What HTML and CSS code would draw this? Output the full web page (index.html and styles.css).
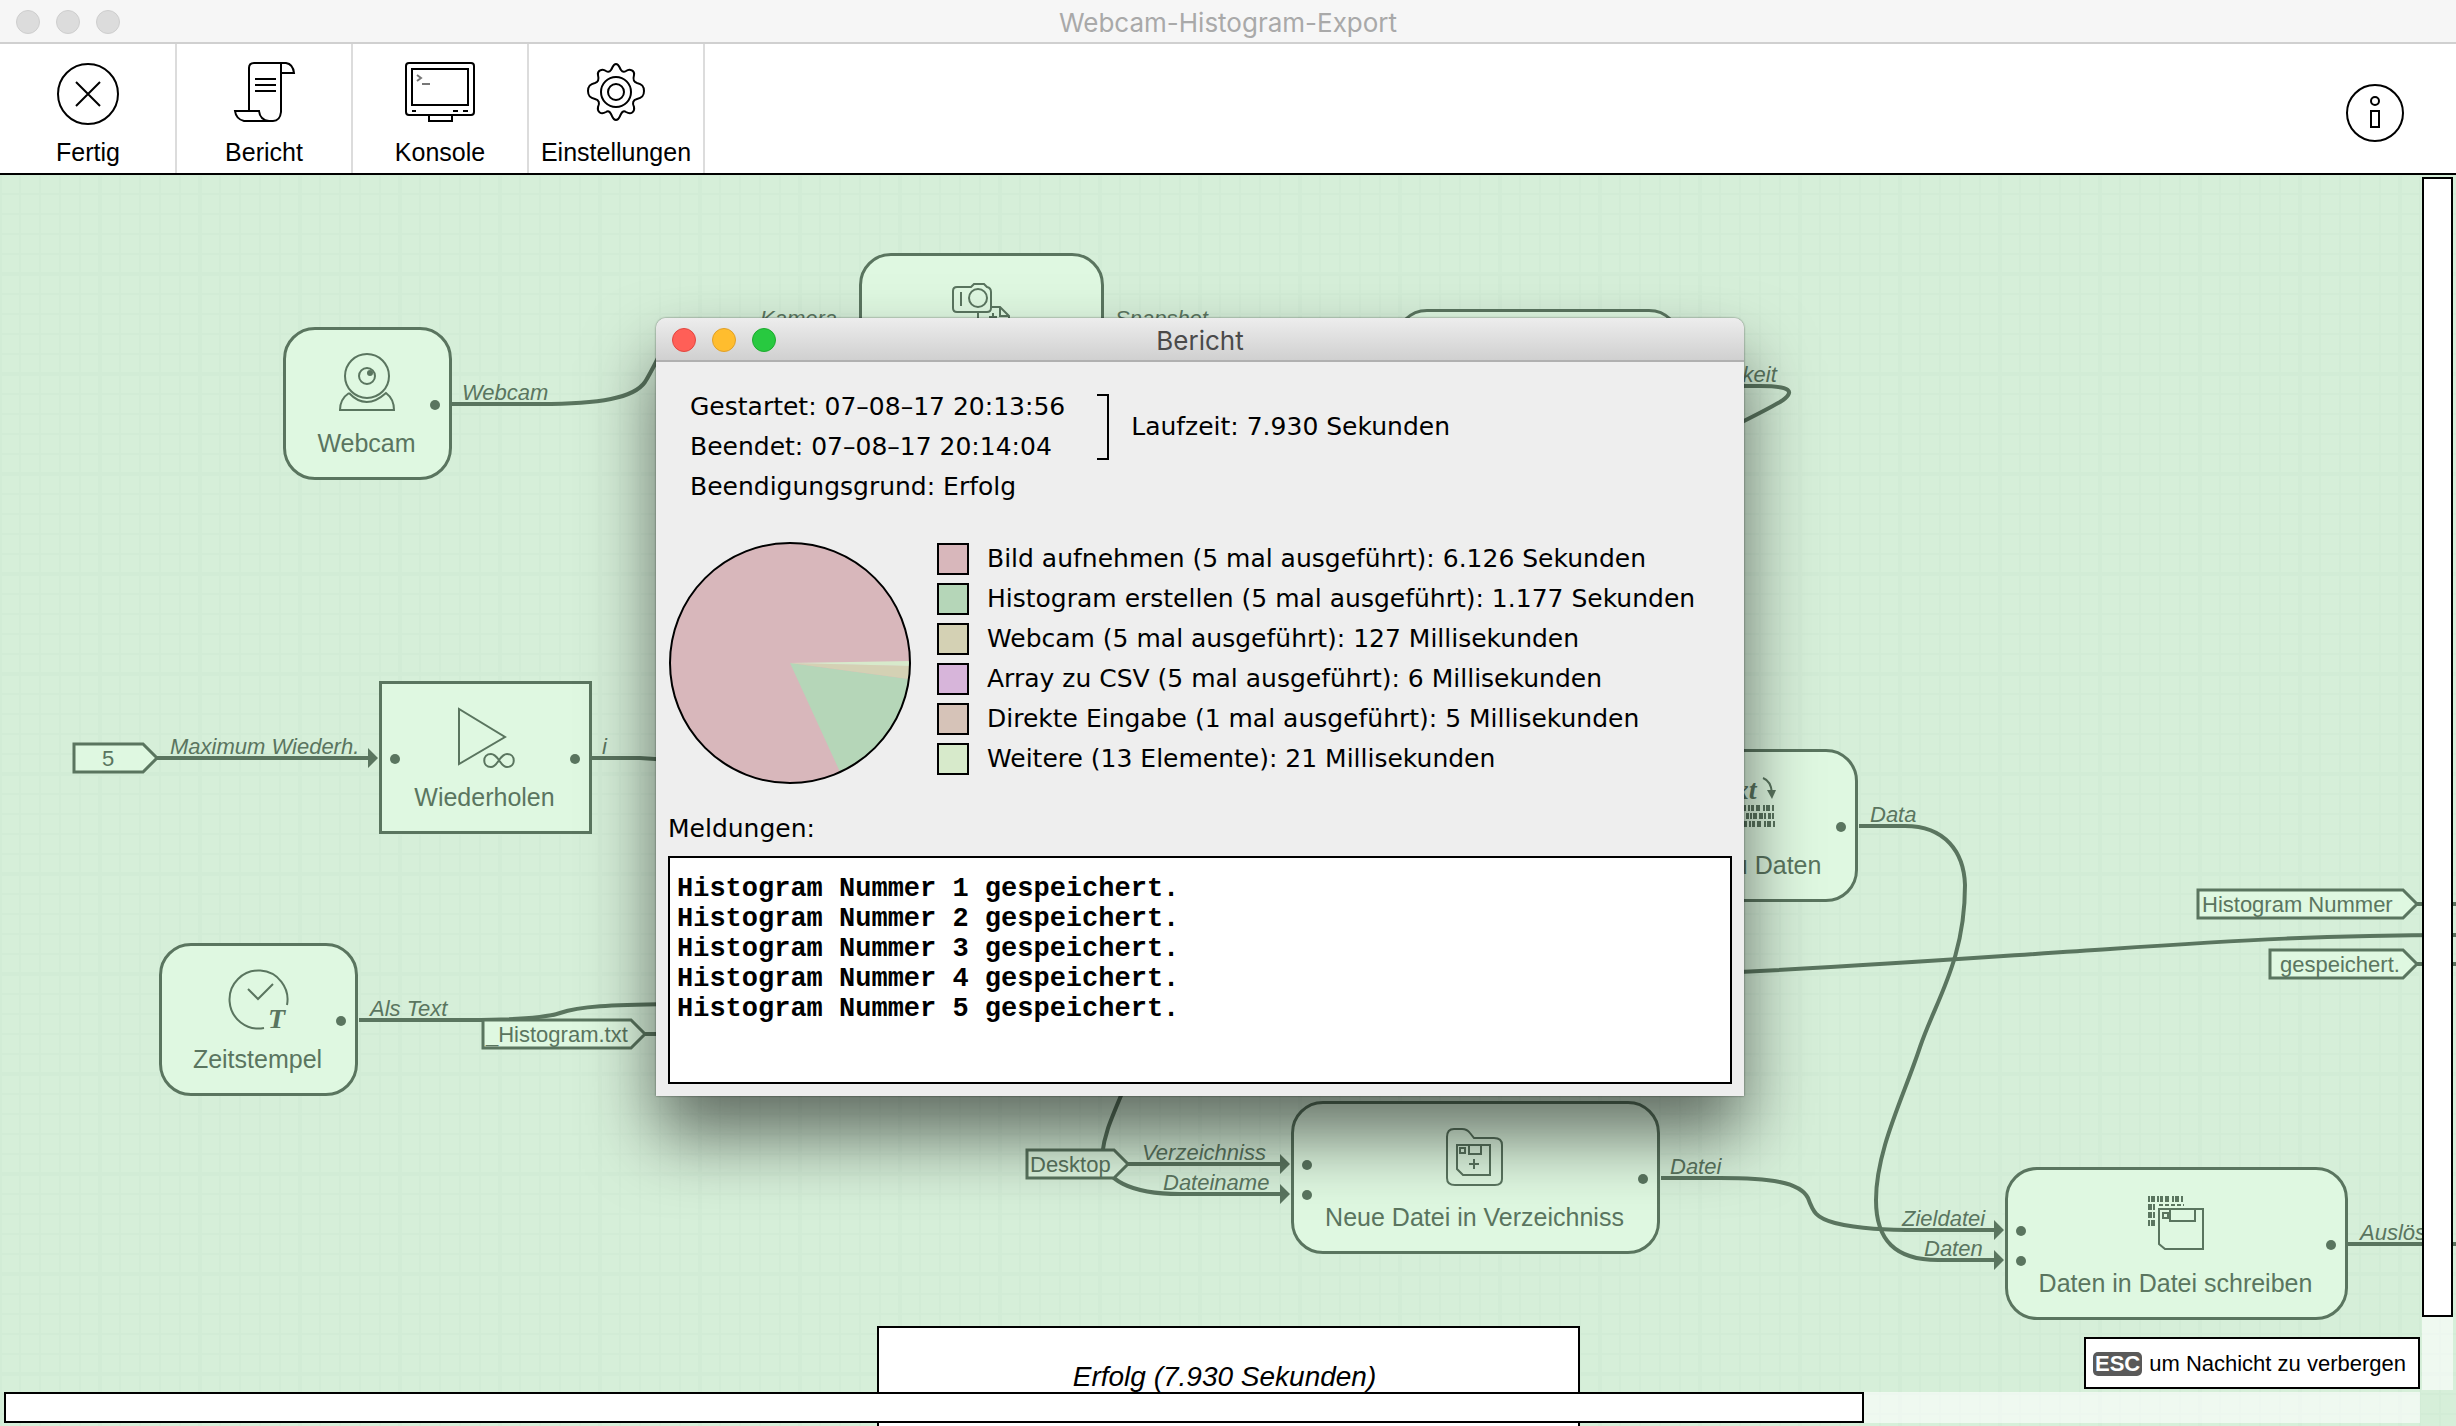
FILE: index.html
```html
<!DOCTYPE html>
<html lang="de">
<head>
<meta charset="utf-8">
<title>Webcam-Histogram-Export</title>
<link rel="stylesheet" href="styles.css">
</head>
<body>
<header class="titlebar">
  <div class="lights"><span class="light"></span><span class="light"></span><span class="light"></span></div>
  <h1 class="title">Webcam-Histogram-Export</h1>
</header>
<nav class="toolbar">
  <button class="tool" type="button">
    <svg class="tool-icon" viewBox="0 0 72 64"><circle cx="36" cy="32" r="30"/><path d="M24 20L48 44M48 20L24 44"/></svg>
    Fertig
  </button>
  <button class="tool" type="button">
    <svg class="tool-icon" viewBox="0 0 72 64"><path d="M21 49V6Q21 1 26 1H58Q65 2 66 11H53V50Q52 59 45 59H16Q8 57 7 49H31Q32 58 41 59M53 11V1M27 17H48M27 23H48M27 29H48"/></svg>
    Bericht
  </button>
  <button class="tool" type="button">
    <svg class="tool-icon" viewBox="0 0 72 64"><rect x="2" y="1" width="68" height="52" rx="3"/><rect x="8" y="7" width="56" height="36"/><path d="M25 53V59H48V53M8 49H12M49 49H54M59 49H64"/><path class="fine" d="M13 13L17 16L13 19M18 22H26"/></svg>
    Konsole
  </button>
  <button class="tool" type="button">
    <svg class="tool-icon" viewBox="0 0 72 64"><path d="M36 2C39 2 39 5 41 8Q43 11 46 9C50 6 55 9 54 13C53 17 53 20 57 21C62 22 64 24 64 29C64 34 62 36 57 37C53 38 52 41 54 45C55 50 51 53 46 50Q43 48 41 52C39 56 39 58 36 58C33 58 33 56 31 52Q29 48 26 50C21 53 17 50 18 45C20 41 19 38 15 37C10 36 8 34 8 29C8 24 10 22 15 21C19 20 19 17 18 13C17 9 22 6 26 9Q29 11 31 8C33 5 33 2 36 2Z"/><circle cx="36" cy="30" r="15"/><circle cx="36" cy="30" r="8"/></svg>
    Einstellungen
  </button>
  <button class="info" type="button" aria-label="Info">
    <svg viewBox="0 0 60 60"><circle cx="30" cy="30" r="28"/><circle cx="30" cy="18" r="4"/><rect x="26" y="28" width="8" height="16"/></svg>
  </button>
</nav>

<main class="canvas">
  <svg class="wires">
    <g transform="translate(0 -175)">
      <path d="M452 404H540C600 404 634 398 645 382C650 374 653 368 658 358"/>
      <path d="M157 758H370M592 758H640L670 760"/>
      <path d="M359 1020H470C520 1020 545 1018 560 1013C580 1006 610 1005 670 1004M644 1034H670"/>
      <path d="M1680 386H1760C1790 386 1797 391 1780 402C1768 409 1756 415 1740 423"/>
      <path d="M1859 826H1905C1945 826 1964 852 1965 885C1965 960 1936 1000 1920 1047C1904 1096 1876 1150 1876 1200C1876 1240 1895 1260 1938 1260H1996"/>
      <path d="M1740 972C1900 964 2000 956 2110 949C2240 940 2330 935 2460 935M2416 904H2460M2416 964H2460"/>
      <path d="M1128 1164H1282M1130 1074C1112 1118 1105 1130 1102 1155C1104 1180 1130 1194 1180 1194H1282"/>
      <path d="M1661 1178H1720C1770 1178 1800 1182 1808 1198C1813 1212 1816 1218 1835 1223C1860 1229 1885 1230 1920 1230H1996M2348 1244H2460"/>
      <path class="head" d="M368 748L378 758L368 768ZM1280 1154L1290 1164L1280 1174ZM1280 1184L1290 1194L1280 1204ZM1994 1220L2004 1230L1994 1240ZM1994 1250L2004 1260L1994 1270Z"/>
      <path class="tag" d="M74 744H143L157 758L143 772H74Z"/>
      <path class="tag" d="M483 1020H631L645 1034L631 1048H483Z"/>
      <path class="tag" d="M2198 890H2403L2417 904L2403 918H2198Z"/>
      <path class="tag" d="M2270 950H2403L2417 964L2403 978H2270Z"/>
      <path class="tag" d="M1027 1150H1114L1128 1164L1114 1178H1027Z"/>
    </g>
  </svg>

  <span class="tag-text t-five">5</span>
  <span class="tag-text t-hist">_Histogram.txt</span>
  <span class="tag-text t-num">Histogram Nummer</span>
  <span class="tag-text t-gesp">gespeichert.</span>
  <span class="tag-text t-desk">Desktop</span>

  <span class="port p-webcam">Webcam</span>
  <span class="port p-kamera">Kamera</span>
  <span class="port p-snap">Snapshot</span>
  <span class="port p-keit">Häufigkeit</span>
  <span class="port p-max">Maximum Wiederh.</span>
  <span class="port p-i">i</span>
  <span class="port p-als">Als Text</span>
  <span class="port p-data">Data</span>
  <span class="port p-verz">Verzeichniss</span>
  <span class="port p-name">Dateiname</span>
  <span class="port p-datei">Datei</span>
  <span class="port p-ziel">Zieldatei</span>
  <span class="port p-daten">Daten</span>
  <span class="port p-aus">Auslöser</span>

  <section class="node n-webcam">
    <svg class="node-icon" viewBox="0 0 64 64"><circle cx="32" cy="25" r="22"/><circle cx="32" cy="25" r="8"/><circle class="solid" cx="35" cy="22" r="3"/><path d="M14 42Q31 60 51 42Q59 48 59 59H5Q5 48 14 42"/></svg>
    <span>Webcam</span><i class="dot out"></i>
  </section>
  <section class="node n-bild">
    <svg class="node-icon" viewBox="0 0 64 64"><g transform="translate(0 5)"><path d="M8 5H22L25 2H35L38 5Q42 6 42 10V26Q42 30 38 30H8Q4 30 4 26V9Q4 5 8 5ZM12 10V24M29 30V58H60V34L51 25H42M51 25V34H60M44 31V39M40 35H48"/><circle cx="29" cy="16" r="9"/></g></svg>
    <span>Bild aufnehmen</span><i class="dot in"></i><i class="dot out"></i>
  </section>
  <section class="node n-erst"></section>
  <section class="node square n-wied">
    <svg class="node-icon" viewBox="0 0 64 64"><path d="M6 4V59L52 32Z"/><path d="M46 55C43 51 41 49 38 49C29 49 29 62 38 62C41 62 43 60 46 55C49 51 51 49 54 49C63 49 63 62 54 62C51 62 49 60 46 55Z"/></svg>
    <span>Wiederholen</span><i class="dot in"></i><i class="dot out"></i>
  </section>
  <section class="node n-zeit">
    <svg class="node-icon" viewBox="0 0 64 64"><path d="M61 38A29 29 0 1 0 38 61M22 22L32 32L47 17"/><text class="icon-t" x="42" y="61">T</text></svg>
    <span>Zeitstempel</span><i class="dot out"></i>
  </section>
  <section class="node n-tzd">
    <svg class="node-icon" viewBox="0 0 64 64"><text class="icon-txt" x="14" y="26">txt</text><path d="M50 5Q58 8 59 20"/><path class="solid" d="M54 17L59 26L63 17Z"/><path class="bars one" d="M2 35H62"/><path class="bars two" d="M2 43H62"/><path class="bars one" d="M3 51H62"/></svg>
    <span>Text zu Daten</span><i class="dot out"></i>
  </section>
  <section class="node n-neue">
    <svg class="node-icon" viewBox="0 0 64 64"><path d="M4 12Q4 4 11 4H19Q24 4 27 8L31 13H51Q59 13 59 20V54Q59 60 52 60H12Q4 60 4 53ZM14 20H47V50H20L14 44ZM26 20V29H38V20M17 23H22V28H17ZM31 34V44M26 39H36"/></svg>
    <span>Neue Datei in Verzeichniss</span><i class="dot in first"></i><i class="dot in second"></i><i class="dot out"></i>
  </section>
  <section class="node n-schr">
    <svg class="node-icon" viewBox="0 0 64 64"><path d="M15 18H59V58H21L15 53ZM26 18V30H51V18M19 22H24V27H19Z"/><path class="bars one" d="M4 8H40"/><path class="bars two" d="M4 16H13M4 24H13"/><path class="bars one" d="M4 32H13"/><path class="bars thin" d="M15 14H40"/></svg>
    <span>Daten in Datei schreiben</span><i class="dot in first"></i><i class="dot in second"></i><i class="dot out"></i>
  </section>

  <p class="result">Erfolg (7.930 Sekunden)</p>
  <p class="hint"><kbd>ESC</kbd> um Nachicht zu verbergen</p>
  <div class="track vertical"><div class="thumb"></div></div>
  <div class="track horizontal"><div class="thumb"></div></div>

  <section class="dialog" role="dialog" aria-labelledby="dialog-title">
    <header class="dialog-bar">
      <div class="lights"><button class="light red" type="button" aria-label="Schließen"></button><button class="light yellow" type="button" aria-label="Minimieren"></button><button class="light green" type="button" aria-label="Zoomen"></button></div>
      <h2 class="title" id="dialog-title">Bericht</h2>
    </header>
    <div class="dialog-body">
      <div class="times">
        <div><p>Gestartet: 07–08–17 20:13:56</p><p>Beendet: 07–08–17 20:14:04</p></div>
        <div class="bracket"></div>
        <p>Laufzeit: 7.930 Sekunden</p>
      </div>
      <p class="reason">Beendigungsgrund: Erfolg</p>
      <div class="chart">
        <svg class="pie" viewBox="-122 -122 244 244">
          <circle class="c-pink" r="120"/>
          <path class="c-green" d="M0 0L119 16A120 120 0 0 1 50 109Z"/>
          <path class="c-tan" d="M0 0L120 3A120 120 0 0 1 119 16Z"/>
          <path class="c-light" d="M0 0L120 -2A120 120 0 0 1 120 3Z"/>
          <circle class="rim" r="120"/>
        </svg>
        <ul class="legend">
          <li><i class="swatch s-pink"></i>Bild aufnehmen (5 mal ausgeführt): 6.126 Sekunden</li>
          <li><i class="swatch s-green"></i>Histogram erstellen (5 mal ausgeführt): 1.177 Sekunden</li>
          <li><i class="swatch s-tan"></i>Webcam (5 mal ausgeführt): 127 Millisekunden</li>
          <li><i class="swatch s-purple"></i>Array zu CSV (5 mal ausgeführt): 6 Millisekunden</li>
          <li><i class="swatch s-brown"></i>Direkte Eingabe (1 mal ausgeführt): 5 Millisekunden</li>
          <li><i class="swatch s-light"></i>Weitere (13 Elemente): 21 Millisekunden</li>
        </ul>
      </div>
      <label class="messages-label" for="messages">Meldungen:</label>
      <textarea class="messages" id="messages" readonly>Histogram Nummer 1 gespeichert.
Histogram Nummer 2 gespeichert.
Histogram Nummer 3 gespeichert.
Histogram Nummer 4 gespeichert.
Histogram Nummer 5 gespeichert.</textarea>
    </div>
  </section>
</main>
</body>
</html>
```
FILE: styles.css
```css
* { box-sizing: border-box; }

:root {
  --ink: #5a755f;
  --node: #dff8e1;
  --bg: #d6efd9;
  --grid: #d2ecd6;
}

body {
  margin: 0;
  height: 100vh;
  display: flex;
  flex-direction: column;
  overflow: hidden;
  background: #fff;
  color: #000;
  font-family: "Liberation Sans", Arial, sans-serif;
}

h1, h2, p, ul { margin: 0; padding: 0; }
button { font: inherit; color: inherit; border: 0; background: none; padding: 0; }
svg { fill: none; stroke: currentColor; stroke-width: 2; }

/* window title bars */
.titlebar, .dialog-bar {
  display: grid;
  grid-template-columns: 1fr auto 1fr;
  align-items: center;
  height: 44px;
}
.titlebar { background: #f6f6f6; border-bottom: 2px solid #d0d0d0; padding: 0 16px; color: #a9a9a9; }
.title { font: 400 26px/32px Inter, sans-serif; padding-top: 3px; }
.lights { display: flex; gap: 16px; padding-top: 2px; }
.light { width: 24px; height: 24px; border-radius: 50%; background: #dcdcdc; border: 1px solid #cecece; }
.red { background: #ff5f57; border-color: #e2463f; }
.yellow { background: #ffbd2e; border-color: #e0a028; }
.green { background: #28c940; border-color: #1dab2e; }

/* toolbar */
.toolbar { display: flex; height: 131px; border-bottom: 2px solid #000; padding-left: 1px; }
.tool {
  width: 176px;
  border-right: 2px solid #dcdcdc;
  display: flex;
  flex-direction: column;
  align-items: center;
  gap: 12px;
  padding-top: 18px;
  font-size: 25px;
  line-height: 28px;
}
.tool-icon { width: 72px; height: 64px; }
.fine { stroke: #777; }
.info { margin: 8px 51px 0 auto; }
.info svg { width: 60px; height: 60px; display: block; }

/* program canvas */
.canvas {
  position: relative;
  flex: 1;
  overflow: hidden;
  color: var(--ink);
  background-color: var(--bg);
  background-image:
    linear-gradient(var(--grid) 4px, transparent 4px),
    linear-gradient(90deg, var(--grid) 4px, transparent 4px),
    linear-gradient(var(--grid) 2px, transparent 2px),
    linear-gradient(90deg, var(--grid) 2px, transparent 2px);
  background-size: 100px 100px, 100px 100px, 20px 20px, 20px 20px;
  background-position: 0 97px, -2px 0, 0 18px, -1px 0;
}
.wires { position: absolute; inset: 0; width: 100%; height: 100%; stroke-width: 4; }
.head { fill: var(--ink); stroke: none; }
.tag { fill: var(--node); stroke-width: 3; }

.tag-text, .port { position: absolute; font-size: 22px; line-height: 26px; white-space: nowrap; }
.port { font-style: italic; }
.t-five { left: 102px; top: 571px; }
.t-hist { left: 486px; top: 847px; }
.t-num { left: 2202px; top: 717px; }
.t-gesp { left: 2280px; top: 777px; }
.t-desk { left: 1030px; top: 977px; }
.p-webcam { left: 462px; top: 205px; }
.p-kamera { left: 760px; top: 131px; }
.p-snap { left: 1115px; top: 131px; }
.p-keit { left: 1679px; top: 187px; }
.p-max { left: 170px; top: 559px; }
.p-i { left: 602px; top: 559px; }
.p-als { left: 370px; top: 821px; }
.p-data { left: 1870px; top: 627px; }
.p-verz { left: 1142px; top: 965px; }
.p-name { left: 1163px; top: 995px; }
.p-datei { left: 1670px; top: 979px; }
.p-ziel { left: 1902px; top: 1031px; }
.p-daten { left: 1924px; top: 1061px; }
.p-aus { left: 2360px; top: 1045px; }

.node {
  position: absolute;
  height: 153px;
  border: 3px solid var(--ink);
  border-radius: 32px;
  background: var(--node);
  display: flex;
  flex-direction: column;
  align-items: center;
  gap: 14px;
  padding: 21px 2px 0 0;
  font-size: 25px;
  line-height: 28px;
  white-space: nowrap;
}
.square { border-radius: 0; }
.node-icon { width: 64px; height: 64px; }
.solid { fill: currentColor; stroke: none; }
.dot { position: absolute; width: 10px; height: 10px; border-radius: 50%; background: var(--ink); top: 70px; }
.in { left: 8px; }
.out { right: 9px; }
.first { top: 56px; }
.second { top: 86px; }
.n-webcam { left: 283px; top: 152px; width: 169px; }
.n-bild { left: 859px; top: 78px; width: 245px; }
.n-erst { left: 1395px; top: 134px; width: 286px; }
.n-wied { left: 379px; top: 506px; width: 213px; }
.n-zeit { left: 159px; top: 768px; width: 199px; }
.n-tzd { left: 1634px; top: 574px; width: 224px; }
.n-neue { left: 1291px; top: 926px; width: 369px; }
.n-schr { left: 2005px; top: 992px; width: 343px; }
.icon-t, .icon-txt { fill: currentColor; stroke: none; font: italic 700 28px "Liberation Serif", serif; }
.bars { stroke-width: 6; }
.one { stroke-dasharray: 2 1 4 2 2 1 3 2 4 3; }
.two { stroke-dasharray: 4 1 2 2 3 1 2 1 4 2; }
.thin { stroke-width: 2; stroke-dasharray: 4 2; }

/* overlays on the canvas */
.result {
  position: absolute;
  left: 877px;
  top: 1151px;
  width: 703px;
  height: 120px;
  border: 2px solid #000;
  background: #fff;
  color: #000;
  padding-right: 8px;
  text-align: center;
  font-size: 28px;
  font-style: italic;
  line-height: 98px;
}
.hint {
  position: absolute;
  right: 36px;
  bottom: 37px;
  height: 52px;
  border: 2px solid #000;
  background: #fff;
  color: #000;
  padding: 2px 12px 0 7px;
  display: flex;
  align-items: center;
  gap: 7px;
  font-size: 22px;
}
kbd { background: #595959; color: #fff; border-radius: 5px; padding: 0 2px; font: 700 22px/24px "Liberation Sans", sans-serif; }
.track { position: absolute; background: rgba(255, 255, 255, .6); }
.thumb { background: #fff; border: 2px solid #000; }
.vertical { right: 3px; top: 2px; bottom: 36px; width: 31px; }
.vertical .thumb { height: 94%; }
.horizontal { left: 4px; right: 36px; bottom: 3px; height: 31px; }
.horizontal .thumb { width: 77%; height: 100%; }

/* report window */
.dialog {
  position: absolute;
  left: 656px;
  top: 143px;
  width: 1088px;
  border-radius: 10px 10px 0 0;
  background: #eee;
  color: #000;
  box-shadow: 0 0 2px rgba(0, 0, 0, .6), 0 40px 70px rgba(0, 0, 0, .55);
  font: 25px/40px "DejaVu Sans", sans-serif;
}
.dialog-bar {
  border-radius: 10px 10px 0 0;
  border-bottom: 2px solid #b0b0b0;
  background: linear-gradient(#ededed, #d0d0d0);
  padding: 0 16px;
  color: #4a4a4a;
}
.dialog-body { padding: 25px 12px 12px; }
.times { display: flex; align-items: center; padding-left: 22px; }
.bracket { width: 12px; height: 66px; border: 2px solid #000; border-left: 0; margin: 0 22px 0 32px; }
.reason { padding-left: 22px; }
.chart { display: flex; gap: 25px; margin-top: 32px; }
.pie { width: 244px; height: 244px; margin-top: 2px; stroke: none; }
.rim { stroke: #000; stroke-width: 2; }
.c-pink { fill: #d8b7bb; }
.c-green { fill: #b5d6b8; }
.c-tan { fill: #d4d1b4; }
.c-light { fill: #d7eacb; }
.legend { list-style: none; }
.legend li { display: flex; align-items: center; gap: 18px; height: 40px; }
.swatch { width: 32px; height: 32px; border: 2px solid #000; }
.s-pink { background: #d8b7bb; }
.s-green { background: #b5d6b8; }
.s-tan { background: #d4d1b4; }
.s-purple { background: #d7b5da; }
.s-brown { background: #d6c3b8; }
.s-light { background: #d7eacb; }
.messages-label { display: block; margin: 24px 0 7px; }
.messages {
  display: block;
  width: 100%;
  height: 228px;
  border: 2px solid #000;
  border-radius: 0;
  padding: 16px 7px;
  background: #fff;
  color: #000;
  resize: none;
  outline: 0;
  font: 700 27px/30px "Liberation Mono", monospace;
}
```
